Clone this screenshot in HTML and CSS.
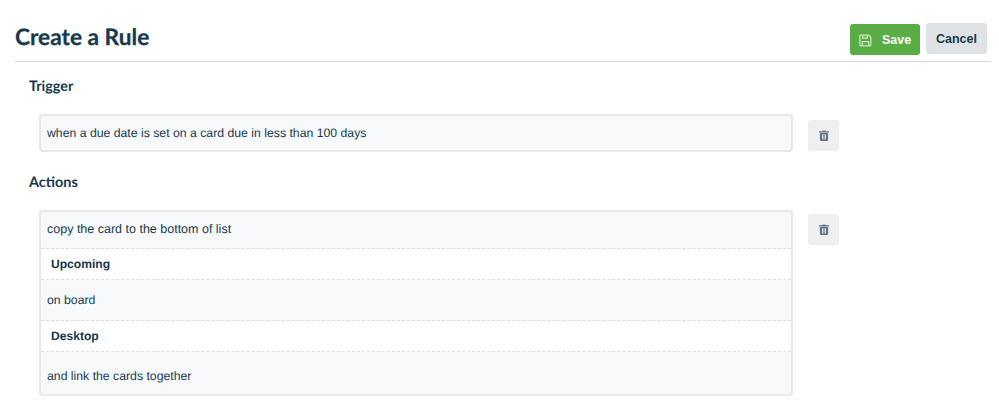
FILE: index.html
```
<!DOCTYPE html>
<html lang="en">
<head>
<meta charset="utf-8">
<title>Create a Rule</title>
<link rel="stylesheet" href="styles.css">
</head>
<body>
<div class="page">
  <header class="topbar">
    <h1 class="title">Create a Rule</h1>
    <div class="top-actions">
      <button class="btn btn-save">
        <svg class="save-icon" viewBox="0 0 14 14" width="13" height="13" aria-hidden="true"><path d="M2 1.2h8.4l2.4 2.4v8.2a1 1 0 0 1-1 1H2a1 1 0 0 1-1-1V2.2a1 1 0 0 1 1-1z" fill="none" stroke="currentColor" stroke-width="1.3"/><path d="M4 1.5v3h5v-3M3.5 12.5V8.2h7v4.3" fill="none" stroke="currentColor" stroke-width="1.3"/></svg>
        <span>Save</span>
      </button>
      <button class="btn btn-cancel">Cancel</button>
    </div>
  </header>
  <section class="section">
    <h2 class="section-title trigger-title">Trigger</h2>
    <div class="rule-row trigger-row">
      <div class="box">
        <div class="line line-trigger">when a due date is set on a card due in less than 100 days</div>
      </div>
      <button class="trash" aria-label="Delete">
        <svg viewBox="0 0 10 11" width="10" height="11" aria-hidden="true"><path d="M3.4 1.2V.4h3.2v.8H10v1.2H0V1.2z" fill="currentColor"/><path fill-rule="evenodd" d="M.9 3h8.2v6.8a1.1 1.1 0 0 1-1.1 1.1H2a1.1 1.1 0 0 1-1.1-1.1zM3 4.3v5.2h.8V4.3zm1.6 0v5.2h.8V4.3zm1.6 0v5.2H7V4.3z" fill="currentColor"/></svg>
      </button>
    </div>
  </section>
  <section class="section">
    <h2 class="section-title actions-title">Actions</h2>
    <div class="rule-row actions-row">
      <div class="box">
        <div class="line line-a">copy the card to the bottom of list</div>
        <div class="line value line-b">Upcoming</div>
        <div class="line line-c">on board</div>
        <div class="line value line-d">Desktop</div>
        <div class="line line-e">and link the cards together</div>
      </div>
      <button class="trash trash-actions" aria-label="Delete">
        <svg viewBox="0 0 10 11" width="10" height="11" aria-hidden="true"><path d="M3.4 1.2V.4h3.2v.8H10v1.2H0V1.2z" fill="currentColor"/><path fill-rule="evenodd" d="M.9 3h8.2v6.8a1.1 1.1 0 0 1-1.1 1.1H2a1.1 1.1 0 0 1-1.1-1.1zM3 4.3v5.2h.8V4.3zm1.6 0v5.2h.8V4.3zm1.6 0v5.2H7V4.3z" fill="currentColor"/></svg>
      </button>
    </div>
  </section>
  <h2 class="section-title next-title">Add another</h2>
</div>
</body>
</html>
```

FILE: styles.css
```
html, body {
  margin: 0;
  padding: 0;
  height: 420px;
  overflow: hidden;
  background: #fff;
}
body {
  font-family: "Liberation Sans", Arial, sans-serif;
  color: #17394d;
  text-rendering: geometricPrecision;
}
.page {
  padding: 0 8px 0 15px;
}
.topbar {
  display: flex;
  justify-content: space-between;
  align-items: flex-start;
  height: 61px;
  border-bottom: 1px solid #d3d6da;
}
.title {
  margin: 0;
  padding-top: 21px;
  font: 700 22.7px/32px Lato, sans-serif;
  color: #17394d;
  -webkit-text-stroke: 0.25px #17394d;
}
.top-actions {
  display: flex;
  gap: 6px;
  padding-top: 23px;
  padding-right: 4px;
}
.btn {
  border: 0;
  border-radius: 3px;
  height: 31px;
  font: 700 12.5px/31px "Liberation Sans", Arial, sans-serif;
  padding: 1px 0 0;
}
.btn-save {
  display: flex;
  align-items: center;
  justify-content: center;
  gap: 10px;
  width: 70px;
  margin-top: 1px;
  background: #5aac44;
  color: #fff;
}
.save-icon {
  color: #cfe8c7;
}
.btn-cancel {
  width: 61px;
  background: #dfe3e6;
  color: #17394d;
}
.section-title {
  margin: 0;
  font: 700 14.4px/20px Lato, sans-serif;
  color: #17394d;
  padding-left: 14px;
}
.trigger-title {
  padding-top: 15px;
}
.rule-row {
  display: flex;
  align-items: flex-start;
  padding-left: 24px;
  gap: 15px;
}
.trigger-row {
  padding-top: 17px;
}
.box {
  width: 754px;
  background: #f8f9fb;
  border: 2px solid #e6e8ec;
  border-radius: 4px;
  box-sizing: border-box;
  overflow: hidden;
  flex: none;
}
.line {
  font-size: 12.25px;
  line-height: 16px;
  padding-left: 6px;
  color: #17394d;
}
.line-trigger {
  padding-top: 9px;
  padding-bottom: 9px;
}
.trash {
  width: 31px;
  height: 31px;
  flex: none;
  border: 0;
  padding: 0;
  border-radius: 3px;
  background: #edeff0;
  color: #5f7585;
  display: flex;
  align-items: center;
  justify-content: center;
  margin-top: 6px;
}
.trash-actions {
  margin-top: 4px;
}
.actions-title {
  padding-top: 21px;
}
.actions-row {
  padding-top: 17px;
}
.line-a {
  font-size: 12.5px;
  padding-top: 9px;
  padding-bottom: 11px;
  border-bottom: 1px dashed #d8dbdf;
}
.value {
  background: #fff;
  font-size: 12.1px;
  font-weight: 700;
  padding-left: 10px;
}
.line-b {
  padding-top: 7px;
  padding-bottom: 7px;
  border-bottom: 1px dashed #d8dbdf;
}
.line-c {
  padding-top: 12px;
  padding-bottom: 12px;
  border-bottom: 1px dashed #d8dbdf;
}
.line-d {
  padding-top: 7px;
  padding-bottom: 7px;
  border-bottom: 1px dashed #d8dbdf;
}
.line-e {
  padding-top: 16px;
  padding-bottom: 10px;
}
.next-title {
  padding-top: 22px;
}
```
